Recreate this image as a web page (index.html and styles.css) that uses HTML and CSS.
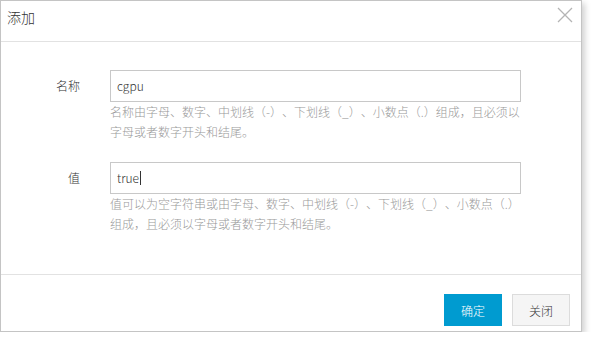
FILE: index.html
```html
<!DOCTYPE html>
<html lang="zh-CN">
<head>
<meta charset="utf-8">
<title>添加</title>
<link rel="stylesheet" href="styles.css">
</head>
<body>
<div class="dialog">
  <div class="dialog-header">
    <span class="dialog-title">添加</span>
    <button class="close" aria-label="关闭">
      <svg width="16" height="16" viewBox="0 0 16 16"><path d="M1 1 L15 15 M15 1 L1 15" stroke="#b4b4b4" stroke-width="1.3" fill="none"/></svg>
    </button>
  </div>
  <div class="dialog-body">
    <div class="form-row">
      <label class="form-label">名称</label>
      <div class="form-control">
        <div class="input">cgpu</div>
        <div class="help">名称由字母、数字、中划线（-）、下划线（_）、小数点（.）组成，且必须以字母或者数字开头和结尾。</div>
      </div>
    </div>
    <div class="form-row">
      <label class="form-label">值</label>
      <div class="form-control">
        <div class="input">true<span class="caret"></span></div>
        <div class="help">值可以为空字符串或由字母、数字、中划线（-）、下划线（_）、小数点（.）组成，且必须以字母或者数字开头和结尾。</div>
      </div>
    </div>
  </div>
  <div class="dialog-footer">
    <button class="btn btn-primary">确定</button>
    <button class="btn btn-default">关闭</button>
  </div>
</div>
</body>
</html>
```
FILE: styles.css
```css
html, body {
  margin: 0;
  padding: 0;
  background: #ffffff;
}
body {
  font-family: "Noto Sans CJK SC", "Open Sans", sans-serif;
  font-weight: 300;
  color: #333333;
  font-size: 12px;
  text-spacing-trim: space-all;
  font-feature-settings: "palt" 0, "halt" 0;
}
.dialog {
  width: 580px;
  height: 330px;
  border: 1px solid #c4c4c4;
  background: #ffffff;
  box-shadow: 3px 3px 6px rgba(0, 0, 0, 0.18);
  display: flex;
  flex-direction: column;
}
.dialog-header {
  height: 40px;
  border-bottom: 1px solid #e2e2e2;
  display: flex;
  justify-content: space-between;
  align-items: flex-start;
  padding-left: 6px;
  padding-right: 8px;
}
.dialog-title {
  font-size: 14px;
  line-height: 20px;
  margin-top: 6px;
  color: #333333;
}
.close {
  border: 0;
  background: none;
  padding: 0;
  margin-top: 6px;
  width: 16px;
  height: 16px;
  display: flex;
}
.dialog-body {
  padding: 28px 0 40px 0;
  display: flex;
  flex-direction: column;
  gap: 20px;
}
.form-row {
  display: flex;
  align-items: flex-start;
}
.form-label {
  width: 79px;
  text-align: right;
  line-height: 32px;
  margin-right: 30px;
  color: #333333;
}
.form-control {
  display: flex;
  flex-direction: column;
}
.input {
  width: 397px;
  height: 30px;
  border: 1px solid #c8c8c8;
  padding: 0 6px;
  line-height: 30px;
  font-size: 12px;
  color: #333333;
  display: flex;
  align-items: center;
}
.caret {
  display: inline-block;
  width: 1px;
  height: 14px;
  background: #333333;
  margin-left: 1px;
}
.help {
  width: 416px;
  line-height: 20px;
  color: #999999;
  font-size: 12px;
}
.dialog-footer {
  flex: 1;
  border-top: 1px solid #e2e2e2;
  display: flex;
  justify-content: flex-end;
  align-items: flex-start;
  gap: 10px;
  padding: 19px 11px 0 0;
}
.btn {
  font-family: "Noto Sans CJK SC", sans-serif;
  font-weight: 300;
  font-size: 12px;
  width: 58px;
  height: 32px;
  padding: 0;
  cursor: pointer;
}
.btn-primary {
  background: #009bd0;
  border: 1px solid #009bd0;
  color: #ffffff;
}
.btn-default {
  background: #f5f5f5;
  border: 1px solid #dcdcdc;
  color: #333333;
}
```
